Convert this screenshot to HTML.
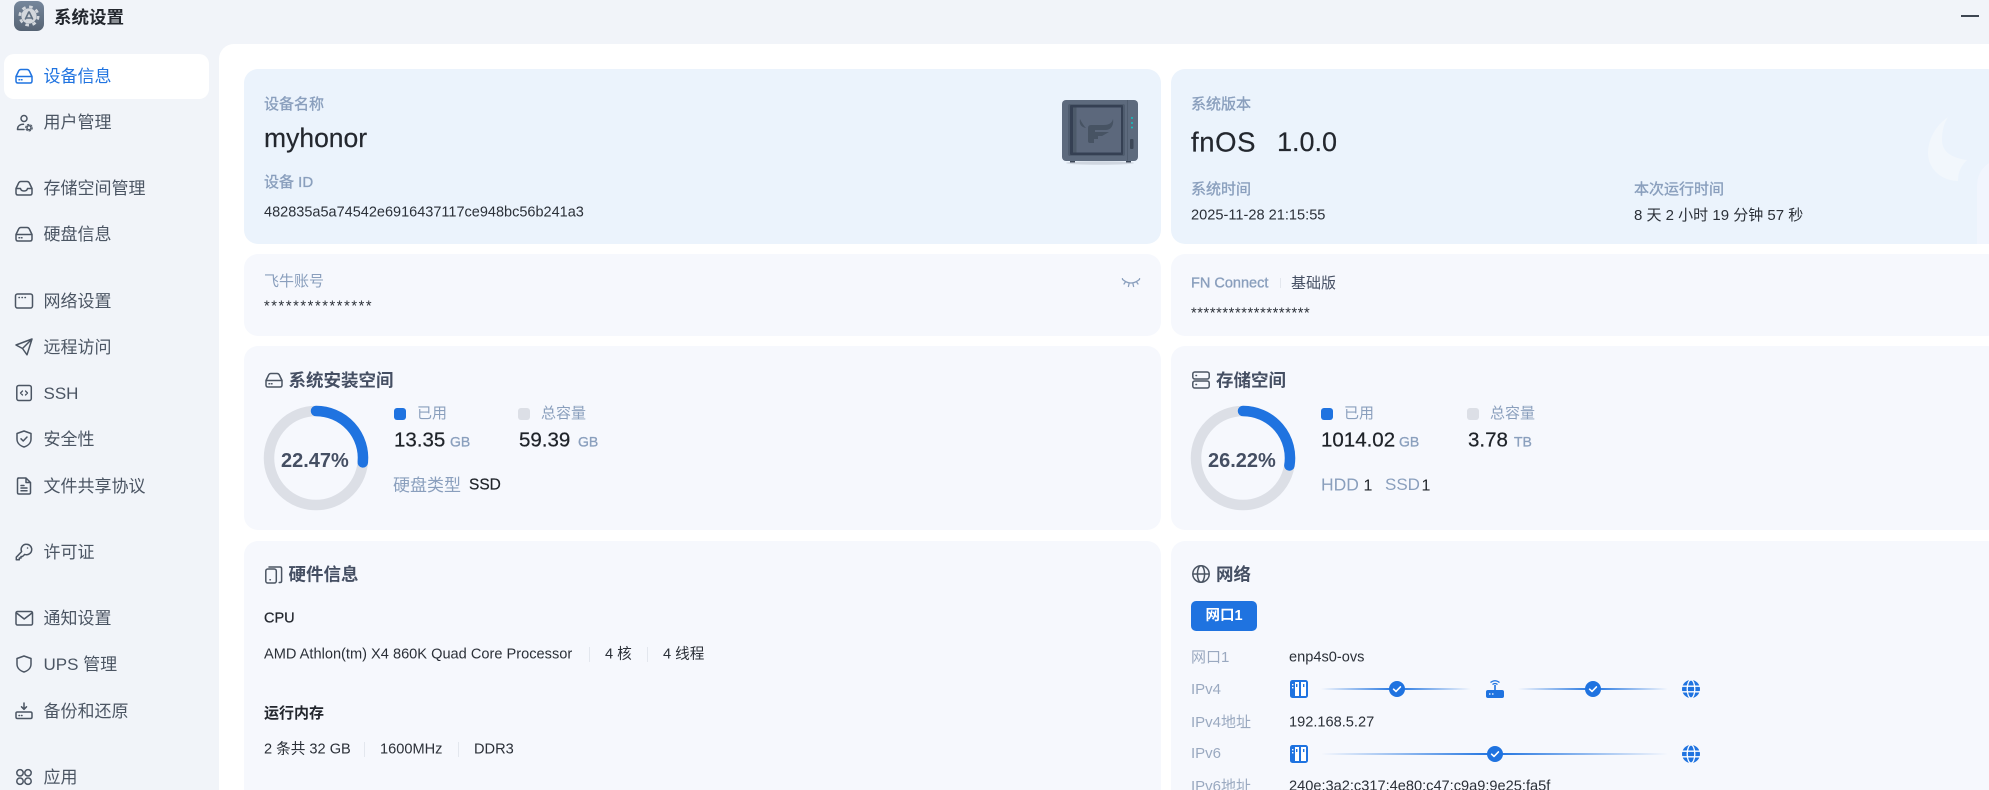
<!DOCTYPE html>
<html lang="zh-CN"><head><meta charset="utf-8"><title>系统设置</title>
<style>
html,body{margin:0;padding:0;width:1989px;height:790px;overflow:hidden;background:#f1f4f9}
body{position:relative;font-family:"Liberation Sans","Noto Sans CJK SC",sans-serif;color:#23272e}
.t{position:absolute;white-space:nowrap;transform:translateY(calc(-50% + 1px));line-height:1.2}
.c{position:absolute;border-radius:14px}
.b{background:#ebf3fc}.l{background:#f6f8fd}
.nav{font-size:17px;left:43.5px;color:#4b5563}
.lab{font-size:15px;color:#8a9fbd}
.m{-webkit-text-stroke:.35px #8a9fbd}
.h{font-size:17.5px;font-weight:700;color:#454f63}
.val{font-size:14.6px;color:#2b3038}
.big{font-size:20.5px;color:#1f2329;-webkit-text-stroke:.25px #1f2329}
.u{font-size:14px;color:#8a9fbd;-webkit-text-stroke:.35px #8a9fbd}
.sq{position:absolute;width:12px;height:12px;border-radius:3px}
.d{position:absolute;width:1px;height:15px;background:#e3e7ee}
svg{position:absolute;overflow:visible}
.ic{fill:none;stroke:#4b5563;stroke-width:1.5;stroke-linecap:round;stroke-linejoin:round}
</style></head><body>
<svg width="0" height="0" style="left:0;top:0"><defs>
<linearGradient id="fade" x1="0" x2="1" y1="0" y2="0"><stop offset="0" stop-color="#1f73e0" stop-opacity="0"/><stop offset=".5" stop-color="#1f73e0"/><stop offset="1" stop-color="#1f73e0" stop-opacity="0"/></linearGradient>
<linearGradient id="app" x1="0" x2="0" y1="0" y2="1"><stop offset="0" stop-color="#76879c"/><stop offset="1" stop-color="#566374"/></linearGradient>
<symbol id="disk" viewBox="0 0 18 18"><path d="M1 9.5 3.4 4.5Q4.2 2.5 6 2.5H12Q13.8 2.5 14.6 4.5L17 9.5V14Q17 16 15 16H3Q1 16 1 14ZM1 9.5H17M4 12.8h.6M6.4 12.8h.6"/></symbol>
<symbol id="nic" viewBox="0 0 18 18"><rect width="18" height="18" rx="2.5" fill="#1f73e0"/><rect x="5" y="2" width="4" height="14" fill="#fff"/><rect x="11" y="2" width="5" height="14" fill="#fff"/><rect x="6" y="4" width="1.4" height="3" fill="#1f73e0"/><rect x="13" y="4" width="1.4" height="3" fill="#1f73e0"/><rect x="2" y="4" width="1.4" height="1.4" fill="#fff"/><rect x="2" y="7" width="1.4" height="1.4" fill="#fff"/></symbol>
<symbol id="globe" viewBox="0 0 18 18"><circle cx="9" cy="9" r="9" fill="#1f73e0"/><path d="M0 6.2H18M0 11.8H18" stroke="#fff" stroke-width="1.3"/><ellipse cx="9" cy="9" rx="3.8" ry="9" fill="none" stroke="#fff" stroke-width="1.3"/></symbol>
<symbol id="chk" viewBox="0 0 16 16"><circle cx="8" cy="8" r="8" fill="#1f73e0"/><path d="M4.6 8.2 7 10.4 11.4 5.9" fill="none" stroke="#fff" stroke-width="1.6" stroke-linecap="round" stroke-linejoin="round"/></symbol>
<filter id="sb"><feGaussianBlur stdDeviation=".35"/></filter>
</defs></svg>

<!-- header -->
<svg style="left:14px;top:1px" width="30" height="30" viewBox="0 0 30 30"><rect width="30" height="30" rx="7" fill="url(#app)"/><g filter="url(#sb)"><circle cx="15" cy="15" r="7.6" fill="#d3d7dc"/><circle cx="15" cy="15" r="9.2" fill="none" stroke="#d3d7dc" stroke-width="2.6" stroke-dasharray="3.6 3.6"/><path d="M15 10.500 11.200 18.500M15 10.500 18.800 18.500M12.500 17H17.500" stroke="#616f81" stroke-width="1.6" fill="none"/></g></svg>
<div class="t" style="left:54px;top:17px;font-size:17.5px;font-weight:700;color:#23272e">系统设置</div>
<div style="position:absolute;left:1961px;top:15px;width:18px;height:2px;background:#3d4652"></div>

<!-- sidebar -->
<div style="position:absolute;left:4px;top:54px;width:205px;height:45px;background:#fff;border-radius:10px"></div>
<svg class="ic" style="left:15px;top:67px;stroke:#1f73e0" width="18" height="18"><use href="#disk"/></svg>
<div class="t nav" style="top:75.500px;color:#1f73e0">设备信息</div>
<svg class="ic" style="left:15px;top:113px" width="18" height="18" viewBox="0 0 18 18"><circle cx="9" cy="5.500" r="3"/><path d="M2.500 16.500C2.500 13 5 11.300 8.500 11.300M2.500 16.500H9"/><circle cx="14" cy="14.700" r="2" stroke-width="1.400"/><circle cx="14" cy="14.700" r="3.300" stroke-width="1" stroke-dasharray="1.700 1.750"/></svg>
<div class="t nav" style="top:122px">用户管理</div>
<svg class="ic" style="left:15px;top:179px" width="18" height="18" viewBox="0 0 18 18"><path d="M1 9.500 3.400 4.500Q4.200 2.500 6 2.500H12Q13.800 2.500 14.600 4.500L17 9.500V14Q17 16 15 16H3Q1 16 1 14ZM1 9.500H5.500Q6 12 9 12T12.500 9.500H17"/></svg>
<div class="t nav" style="top:188px">存储空间管理</div>
<svg class="ic" style="left:15px;top:225px" width="18" height="18"><use href="#disk"/></svg>
<div class="t nav" style="top:234px">硬盘信息</div>
<svg class="ic" style="left:15px;top:292px" width="18" height="18" viewBox="0 0 18 18"><rect x=".5" y="2" width="17" height="14" rx="2"/><path d="M4 5.500h.4M7 5.500h.4M10 5.500h.4"/></svg>
<div class="t nav" style="top:301px">网络设置</div>
<svg class="ic" style="left:15px;top:338px" width="18" height="18" viewBox="0 0 18 18"><path d="M17 1 1 7 7.500 10.500 12 16.800ZM17 1 7.500 10.500"/></svg>
<div class="t nav" style="top:347px">远程访问</div>
<svg class="ic" style="left:15px;top:384px" width="18" height="18" viewBox="0 0 18 18"><rect x="1.800" y="1.500" width="14.500" height="15" rx="2"/><path d="M7.500 7 5.500 9 7.500 11M10.500 7 12.500 9 10.500 11" stroke-width="1.300"/></svg>
<div class="t nav" style="top:392.500px">SSH</div>
<svg class="ic" style="left:15px;top:430px" width="18" height="18" viewBox="0 0 18 18"><path d="M9 1 16 3.500V9C16 13 13 15.800 9 17 5 15.800 2 13 2 9V3.500ZM6 8.800 8.200 11 12 7"/></svg>
<div class="t nav" style="top:439px">安全性</div>
<svg class="ic" style="left:15px;top:477px" width="18" height="18" viewBox="0 0 18 18"><path d="M3 1H11L15.500 5.500V15.500Q15.500 17 14 17H4Q2.500 17 2.500 15.500V2.500Q2.500 1 4 1ZM11 1V5.500H15.500M6 8.500H9M6 11H12M6 13.800H12"/></svg>
<div class="t nav" style="top:486px">文件共享协议</div>
<svg class="ic" style="left:15px;top:543px" width="18" height="18" viewBox="0 0 18 18"><path d="M11.500 1.300A5.200 5.200 0 0 1 16.700 6.500 5.200 5.200 0 0 1 9.700 11.400L7.500 13.500H6V15H4.300V16.700H1.300V14.200L6.600 8.600A5.200 5.200 0 0 1 11.500 1.300ZM12.500 5h.1"/></svg>
<div class="t nav" style="top:552px">许可证</div>
<svg class="ic" style="left:15px;top:609px" width="18" height="18" viewBox="0 0 18 18"><rect x="1" y="2.500" width="16.500" height="13.500" rx="1.500"/><path d="M1.500 4 9.200 10 17 4"/></svg>
<div class="t nav" style="top:618px">通知设置</div>
<svg class="ic" style="left:15px;top:655px" width="18" height="18" viewBox="0 0 18 18"><path d="M9 1 16 3.500V9C16 13 13 15.800 9 17 5 15.800 2 13 2 9V3.500Z"/></svg>
<div class="t nav" style="top:664px">UPS 管理</div>
<svg class="ic" style="left:15px;top:702px" width="18" height="18" viewBox="0 0 18 18"><path d="M9 1V7M6.500 4.800 9 7.300 11.500 4.800M1 11Q1 10 2.500 10H15.500Q17 10 17 11.500V15Q17 16.500 15.500 16.500H2.500Q1 16.500 1 15ZM4 13.500h.5M6.500 13.500h.5"/></svg>
<div class="t nav" style="top:711px">备份和还原</div>
<svg class="ic" style="left:15px;top:768px" width="18" height="18" viewBox="0 0 18 18"><circle cx="5" cy="4.800" r="3.200"/><circle cx="13" cy="4.800" r="3.200"/><circle cx="5" cy="13.200" r="3.200"/><circle cx="13" cy="13.200" r="3.200"/></svg>
<div class="t nav" style="top:777px">应用</div>

<!-- main -->
<div style="position:absolute;left:219px;top:44px;width:1770px;height:746px;background:#fff;border-top-left-radius:15px"></div>

<!-- device card -->
<div class="c b" style="left:244px;top:69px;width:917px;height:175px"></div>
<div class="t lab m" style="left:264px;top:104px">设备名称</div>
<div class="t" style="left:264px;top:138px;font-size:26.500px;color:#23272e;-webkit-text-stroke:.2px #23272e">myhonor</div>
<div class="t lab m" style="left:264px;top:182px">设备 ID</div>
<div class="t" style="left:264px;top:212px;font-size:14.500px;color:#2b3038">482835a5a74542e6916437117ce948bc56b241a3</div>
<svg style="left:1062px;top:99px" width="76" height="66" viewBox="0 0 76 66">
<ellipse cx="38" cy="64" rx="34" ry="1.800" fill="#cfd6e0"/>
<rect x="8" y="60" width="5" height="3.500" fill="#3c4757"/><rect x="64" y="60" width="5" height="3.500" fill="#3c4757"/>
<rect y="1" width="76" height="61" rx="4" fill="#5d6a7d"/>
<rect x="65" y="1" width="1" height="61" fill="#505d6f"/>
<g filter="url(#sb)">
<rect x="6" y="5" width="57" height="52" rx="2" fill="#505c6e"/>
<rect x="8" y="6" width="53" height="50" rx="1" fill="#344152"/>
<rect x="11" y="8.500" width="48" height="45" fill="#5b687b"/>
<rect x="11" y="8.500" width="3.500" height="45" fill="#4e5a6b"/>
<path d="M18 20C17 25 19 28 24 29 22 27 20 24 18 20ZM51 20C50 24 47 26 42 26H29Q26 26 26 29V42Q26 44 28 44H32V40H36V37H40L47 33H33V31H44C49 31 52 26 51 20Z" fill="#465264"/>
</g>
<circle cx="70" cy="19" r="1" fill="#12c2c2"/><circle cx="70" cy="24" r="1" fill="#12c2c2"/><circle cx="70" cy="28.500" r="1" fill="#12c2c2"/>
<rect x="68" y="40" width="3.500" height="10" rx="1" fill="#3c4757"/>
</svg>

<!-- system card -->
<div class="c b" style="left:1171px;top:69px;width:830px;height:175px"></div>
<svg style="left:0;top:0" width="1989" height="244"><path d="M1948 117C1935 126 1928 140 1928 153 1928 170 1943 181 1958 181 1958 172 1961 166 1967 160 1952 158 1942 152 1942 140 1942 130 1944 124 1948 117Z" fill="#f2f7fc"/><path d="M1989 163C1981 168 1977 176 1977 187V244H1989Z" fill="#f1f5fd"/></svg>
<div class="t lab m" style="left:1191px;top:104px">系统版本</div>
<div class="t" style="left:1191px;top:140.500px;font-size:27.500px;letter-spacing:.6px;color:#23272e;-webkit-text-stroke:.2px #23272e">fnOS</div>
<div class="t" style="left:1277px;top:140.500px;font-size:27px;color:#23272e;-webkit-text-stroke:.2px #23272e">1.0.0</div>
<div class="t lab m" style="left:1191px;top:189px">系统时间</div>
<div class="t val" style="left:1191px;top:214.500px">2025-11-28 21:15:55</div>
<div class="t lab m" style="left:1634px;top:189px">本次运行时间</div>
<div class="t val" style="left:1634px;top:214.500px;font-size:15px">8 天 2 小时 19 分钟 57 秒</div>

<!-- account -->
<div class="c l" style="left:244px;top:254px;width:917px;height:82px"></div>
<div class="t lab" style="left:264px;top:280.500px">飞牛账号</div>
<div class="t val" style="left:264px;top:306px;letter-spacing:1.600px">***************</div>
<svg style="left:1122px;top:278px" width="18" height="11" viewBox="0 0 18 11" fill="none" stroke="#8a9fbd" stroke-width="1.300" stroke-linecap="round"><path d="M.6 1.500Q9 8.500 17.400 1.500M3.400 4 2 6M7 6 6.400 8.500M11 6 11.600 8.500M14.600 4 16 6M.6 1.500.4 .6M17.400 1.500 17.600 .6"/></svg>
<div class="c l" style="left:1171px;top:254px;width:830px;height:82px"></div>
<div class="t lab m" style="left:1191px;top:283px;font-size:14.500px">FN Connect</div>
<div class="d" style="left:1280px;top:278px;height:10px"></div>
<div class="t" style="left:1291px;top:283px;font-size:15px;color:#454f63">基础版</div>
<div class="t val" style="left:1191px;top:313px;letter-spacing:.6px">*******************</div>

<!-- system install space -->
<div class="c l" style="left:244px;top:346px;width:917px;height:184px"></div>
<svg class="ic" style="left:265px;top:371px" width="18" height="18"><use href="#disk"/></svg>
<div class="t h" style="left:288.500px;top:379.500px">系统安装空间</div>
<svg style="left:258px;top:400px" width="116" height="116" viewBox="0 0 116 116"><circle cx="58" cy="58" r="47" fill="none" stroke="#dcdfe6" stroke-width="10.500"/><path d="M58 11A47 47 0 0 1 104.800 62.400" fill="none" stroke="#1f73e0" stroke-width="10.500" stroke-linecap="round"/></svg>
<div class="t" style="left:281px;top:460px;font-size:20px;font-weight:700;color:#454f63">22.47%</div>
<div class="sq" style="left:394px;top:408px;background:#1f73e0"></div>
<div class="t lab" style="left:417px;top:413px">已用</div>
<div class="sq" style="left:518px;top:408px;background:#dcdfe6"></div>
<div class="t lab" style="left:541px;top:413px">总容量</div>
<div class="t big" style="left:394px;top:440px">13.35</div>
<div class="t u" style="left:450px;top:441px">GB</div>
<div class="t big" style="left:519px;top:440px">59.39</div>
<div class="t u" style="left:578px;top:441px">GB</div>
<div class="t" style="left:393px;top:485px;font-size:17px;color:#8a9fbd">硬盘类型</div>
<div class="t" style="left:469px;top:485px;font-size:15.500px;color:#1f2329;-webkit-text-stroke:.2px #1f2329">SSD</div>

<!-- storage -->
<div class="c l" style="left:1171px;top:346px;width:830px;height:184px"></div>
<svg class="ic" style="left:1192px;top:371px" width="18" height="18" viewBox="0 0 18 18"><rect x=".8" y="1" width="16.400" height="7" rx="2"/><rect x=".8" y="10" width="16.400" height="7" rx="2"/><path d="M4 4.500h.5M4 13.500h.5"/></svg>
<div class="t h" style="left:1216px;top:379.500px">存储空间</div>
<svg style="left:1185px;top:400px" width="116" height="116" viewBox="0 0 116 116"><circle cx="58" cy="58" r="47" fill="none" stroke="#dcdfe6" stroke-width="10.500"/><path d="M58 11A47 47 0 0 1 104.400 65.500" fill="none" stroke="#1f73e0" stroke-width="10.500" stroke-linecap="round"/></svg>
<div class="t" style="left:1208px;top:460px;font-size:20px;font-weight:700;color:#454f63">26.22%</div>
<div class="sq" style="left:1321px;top:408px;background:#1f73e0"></div>
<div class="t lab" style="left:1344px;top:413px">已用</div>
<div class="sq" style="left:1467px;top:408px;background:#dcdfe6"></div>
<div class="t lab" style="left:1490px;top:413px">总容量</div>
<div class="t big" style="left:1321px;top:440px">1014.02</div>
<div class="t u" style="left:1399px;top:441px">GB</div>
<div class="t big" style="left:1468px;top:440px">3.78</div>
<div class="t u" style="left:1514px;top:441px">TB</div>
<div class="t" style="left:1321px;top:484px;font-size:17.500px;color:#8a9fbd">HDD</div>
<div class="t" style="left:1363.500px;top:484.500px;font-size:16px;color:#1f2329">1</div>
<div class="t" style="left:1385px;top:484px;font-size:17px;color:#8a9fbd">SSD</div>
<div class="t" style="left:1421.500px;top:484.500px;font-size:16px;color:#1f2329">1</div>

<!-- hardware -->
<div class="c l" style="left:244px;top:541px;width:917px;height:280px"></div>
<svg class="ic" style="left:265px;top:566px" width="18" height="18" viewBox="0 0 18 18" stroke-width="1.300"><rect x=".8" y="3" width="10.500" height="14" rx="2"/><path d="M4 1H15Q16.600 1 16.600 2.600V15Q16.600 16.500 15 16.500H14.200"/><path d="M5 13.800h.3"/></svg>
<div class="t h" style="left:288.500px;top:574px">硬件信息</div>
<div class="t" style="left:264px;top:618px;font-size:14.500px;color:#23272e;-webkit-text-stroke:.25px #23272e">CPU</div>
<div class="t val" style="left:264px;top:654px">AMD Athlon(tm) X4 860K Quad Core Processor</div>
<div class="d" style="left:589px;top:647px"></div>
<div class="t val" style="left:605px;top:654px">4 核</div>
<div class="d" style="left:647px;top:647px"></div>
<div class="t val" style="left:663px;top:654px">4 线程</div>
<div class="t" style="left:264px;top:713px;font-size:15px;font-weight:700;color:#23272e">运行内存</div>
<div class="t val" style="left:264px;top:749px">2 条共 32 GB</div>
<div class="d" style="left:364px;top:742px"></div>
<div class="t val" style="left:380px;top:749px">1600MHz</div>
<div class="d" style="left:458px;top:742px"></div>
<div class="t val" style="left:474px;top:749px">DDR3</div>

<!-- network -->
<div class="c l" style="left:1171px;top:541px;width:830px;height:280px"></div>
<svg class="ic" style="left:1192px;top:565px" width="18" height="18" viewBox="0 0 18 18"><circle cx="9" cy="9" r="8.200"/><ellipse cx="9" cy="9" rx="3.600" ry="8.200"/><path d="M1 9H17"/></svg>
<div class="t h" style="left:1216px;top:574px">网络</div>
<div style="position:absolute;left:1191px;top:601px;width:66px;height:30px;background:#1f73e0;border-radius:5px;color:#fff;font-size:14.500px;font-weight:700;line-height:30px;text-align:center">网口1</div>
<div class="t lab" style="left:1191px;top:657px;color:#9aa9c0">网口1</div>
<div class="t val" style="left:1289px;top:657px">enp4s0-ovs</div>
<div class="t lab" style="left:1191px;top:688.500px;color:#9aa9c0">IPv4</div>
<svg style="left:1290px;top:680px" width="18" height="18"><use href="#nic"/></svg>
<svg style="left:1321px;top:688px" width="150" height="2"><rect width="150" height="2" fill="url(#fade)"/></svg>
<svg style="left:1389px;top:681px" width="16" height="16"><use href="#chk"/></svg>
<svg style="left:1486px;top:680px" width="18" height="18" viewBox="0 0 18 18"><rect y="10" width="18" height="8" rx="2" fill="#1f73e0"/><rect x="8.200" y="5" width="1.600" height="6" fill="#1f73e0"/><path d="M6.500 4.500Q9 2.500 11.500 4.500M4.500 2.500Q9 -1 13.500 2.500" fill="none" stroke="#1f73e0" stroke-width="1.300"/><path d="M3 14h1.500M6 14h1.500" stroke="#fff" stroke-width="1.300"/></svg>
<svg style="left:1518px;top:688px" width="150" height="2"><rect width="150" height="2" fill="url(#fade)"/></svg>
<svg style="left:1585px;top:681px" width="16" height="16"><use href="#chk"/></svg>
<svg style="left:1682px;top:680px" width="18" height="18"><use href="#globe"/></svg>
<div class="t lab" style="left:1191px;top:722px;color:#9aa9c0">IPv4地址</div>
<div class="t val" style="left:1289px;top:722px">192.168.5.27</div>
<div class="t lab" style="left:1191px;top:753px;color:#9aa9c0">IPv6</div>
<svg style="left:1290px;top:745px" width="18" height="18"><use href="#nic"/></svg>
<svg style="left:1321px;top:753px" width="347" height="2"><rect width="347" height="2" fill="url(#fade)"/></svg>
<svg style="left:1487px;top:746px" width="16" height="16"><use href="#chk"/></svg>
<svg style="left:1682px;top:745px" width="18" height="18"><use href="#globe"/></svg>
<div class="t lab" style="left:1191px;top:786px;color:#9aa9c0">IPv6地址</div>
<div class="t val" style="left:1289px;top:786px">240e:3a2:c317:4e80:c47:c9a9:9e25:fa5f</div>
</body></html>
